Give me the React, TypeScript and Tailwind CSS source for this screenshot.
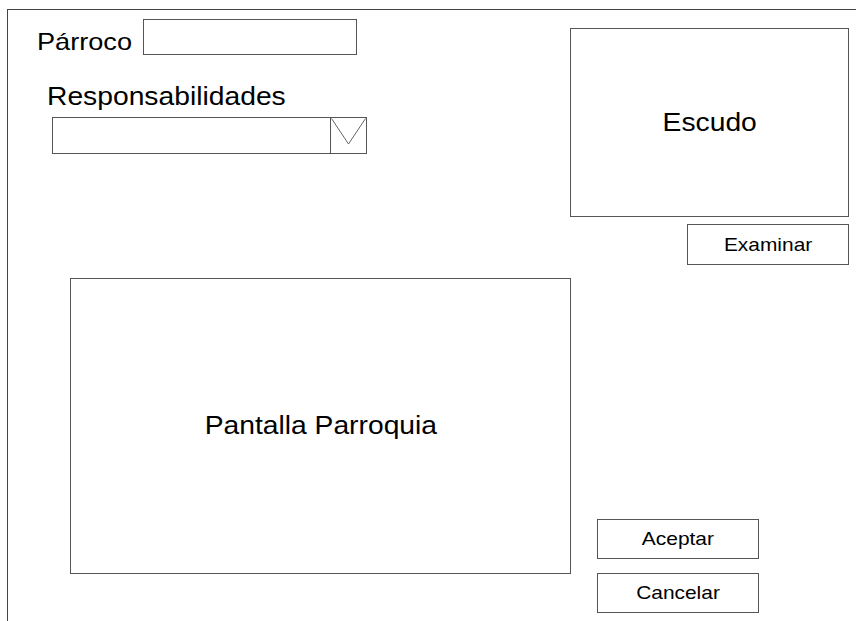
const font = { fontFamily: '"Liberation Sans", Arial, sans-serif' };

function Box({ className, children }: { className: string; children?: React.ReactNode }) {
  return (
    <div className={`flex items-center justify-center border border-[#555] bg-white text-black ${className}`}>
      {children && <span className="inline-block origin-center scale-x-[1.13]">{children}</span>}
    </div>
  );
}

export default function App() {
  return (
    <div className="flex h-[621px] w-[856px] overflow-hidden bg-white pl-[7px] pt-[9px]" style={font}>
      <div className="flex flex-1 flex-col border-l border-t border-[#444]">
        {/* top part */}
        <div className="flex items-start">
          <div className="flex w-[562px] flex-col">
            <div className="mt-[9px] flex items-start">
              <span className="ml-[29px] mt-[11px] inline-block w-[106px] origin-left scale-x-[1.13] text-[24px] leading-[24px] text-black">
                Párroco
              </span>
              <Box className="h-[36px] w-[214px]" />
            </div>
            <span className="ml-[39px] mt-[29px] inline-block origin-left scale-x-[1.13] text-[25px] leading-[25px] text-black">
              Responsabilidades
            </span>
            <div className="ml-[44px] mt-[8px] flex h-[37px] w-[315px] border border-[#555]">
              <div className="flex-1" />
              <div className="w-[36px] border-l border-[#555]">
                <svg width="35" height="35" viewBox="0 0 35 35" className="block">
                  <polyline points="0.5,0.5 17.5,26 34.5,0.5" fill="none" stroke="#666" strokeWidth="1" />
                </svg>
              </div>
            </div>
          </div>
          <div className="flex flex-col items-end">
            <Box className="mt-[18px] h-[189px] w-[279px] text-[25px]">Escudo</Box>
            <Box className="mt-[7px] h-[41px] w-[162px] text-[18.5px]">Examinar</Box>
          </div>
        </div>

        {/* bottom part */}
        <div className="mt-[13px] flex items-start">
          <Box className="ml-[62px] h-[296px] w-[501px] text-[25px]">Pantalla Parroquia</Box>
          <div className="ml-[26px] mt-[241px] flex flex-col gap-[14px]">
            <Box className="h-[40px] w-[162px] text-[18.5px]">Aceptar</Box>
            <Box className="h-[40px] w-[162px] text-[18.5px]">Cancelar</Box>
          </div>
        </div>
      </div>
    </div>
  );
}
